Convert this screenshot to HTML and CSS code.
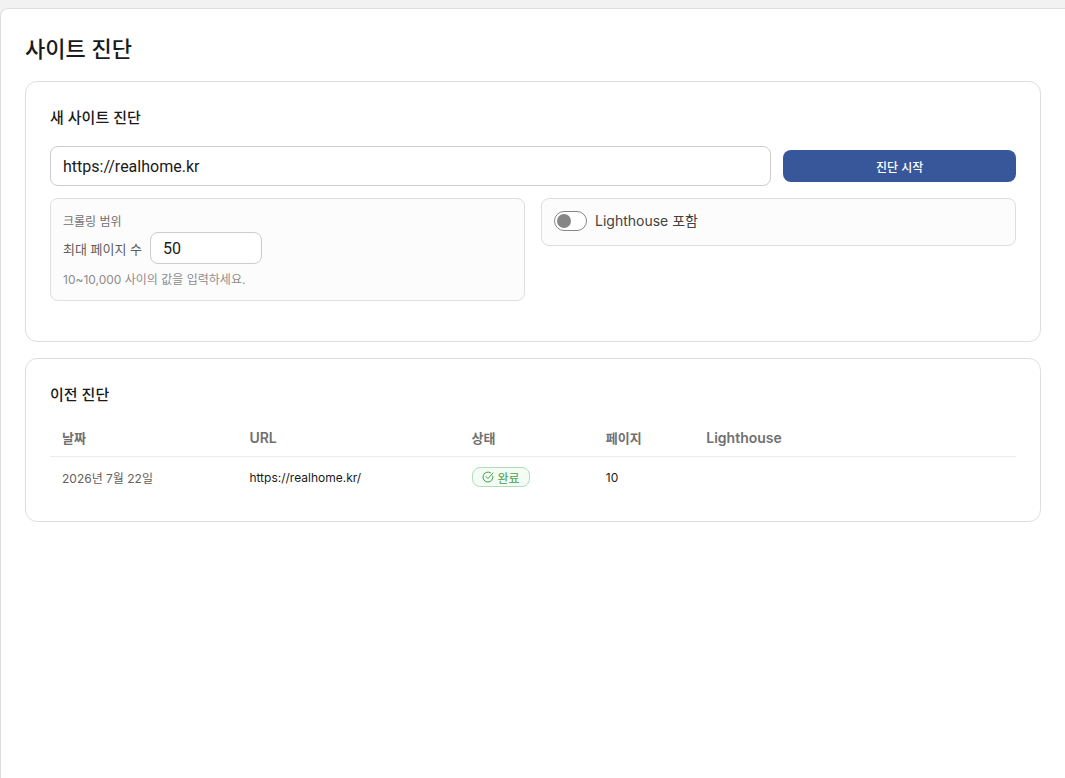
FILE: index.html
```html
<!DOCTYPE html>
<html lang="ko">
<head>
  <meta charset="UTF-8">
  <meta name="viewport" content="width=device-width, initial-scale=1">
  <title>사이트 진단</title>
  <link rel="stylesheet" href="styles.css">
</head>
<body>
  <main class="page">
    <h1>사이트 진단</h1>

    <section class="card">
      <h2>새 사이트 진단</h2>
      <form class="audit-form">
        <div class="url-row">
          <input class="field url-input" type="text" aria-label="사이트 URL" value="https://realhome.kr">
          <button class="start-btn" type="button">진단 시작</button>
        </div>
        <div class="options">
          <div class="panel">
            <p class="panel-title">크롤링 범위</p>
            <div class="limit-row">
              <label for="max-pages">최대 페이지 수</label>
              <input class="field limit-input" type="text" inputmode="numeric" id="max-pages" value="50">
            </div>
            <p class="hint">10~10,000 사이의 값을 입력하세요.</p>
          </div>
          <div class="panel">
            <label class="switch-row">
              <input class="switch" type="checkbox" role="switch">
              <span>Lighthouse 포함</span>
            </label>
          </div>
        </div>
      </form>
    </section>

    <section class="card">
      <h2>이전 진단</h2>
      <table class="history">
        <colgroup>
          <col class="col-date">
          <col class="col-url">
          <col class="col-status">
          <col class="col-pages">
          <col>
        </colgroup>
        <thead>
          <tr>
            <th>날짜</th>
            <th class="latin">URL</th>
            <th>상태</th>
            <th>페이지</th>
            <th class="latin">Lighthouse</th>
          </tr>
        </thead>
        <tbody>
          <tr>
            <td class="date">2026년 7월 22일</td>
            <td>https://realhome.kr/</td>
            <td>
              <span class="badge">
                <svg viewBox="0 0 24 24" width="12" height="12" aria-hidden="true">
                  <path d="M21.8 10A10 10 0 1 1 17 3.34"/>
                  <path d="m8 11 4 4L22 4"/>
                </svg>
                완료
              </span>
            </td>
            <td>10</td>
            <td></td>
          </tr>
        </tbody>
      </table>
    </section>
  </main>
</body>
</html>
```
FILE: styles.css
```css
* {
  box-sizing: border-box;
}

body {
  margin: 0;
  padding-top: 8px;
  min-height: 100vh;
  display: flex;
  flex-direction: column;
  background: #f2f2f2;
  color: #1a1a1a;
  font-family: Inter, "Noto Sans CJK KR", sans-serif;
  font-size: 14px;
}

h1, h2, p {
  margin: 0;
}

.page {
  flex: 1;
  padding: 24px;
  background: #fff;
  border: 1px solid #dedede;
  border-right: none;
  border-bottom: none;
  border-top-left-radius: 8px;
}

h1 {
  margin-bottom: 16px;
  font-size: 22px;
  line-height: 32px;
  font-weight: 500;
}

h2 {
  font-size: 15px;
  line-height: 24px;
  font-weight: 500;
}

.card {
  padding: 24px;
  border: 1px solid #dedede;
  border-radius: 12px;
}

.card + .card {
  margin-top: 16px;
}

/* form */
.audit-form {
  margin: 16px 0;
}

.url-row {
  display: grid;
  grid-template-columns: 3.1fr 1fr;
  gap: 12px;
  align-items: center;
}

.field {
  min-width: 0;
  padding: 0 12px;
  border: 1px solid #ccc;
  border-radius: 8px;
  background: #fff;
  color: #1a1a1a;
  font-family: Roboto, "Noto Sans CJK KR", sans-serif;
  font-size: 16px;
}

.url-input {
  height: 40px;
}

.start-btn {
  height: 32px;
  padding: 0 12px;
  border: none;
  border-radius: 8px;
  background: #38579a;
  color: #fff;
  font-family: inherit;
  font-size: 12px;
  font-weight: 500;
  cursor: pointer;
}

.options {
  display: grid;
  grid-template-columns: 1fr 1fr;
  gap: 16px;
  align-items: start;
  margin-top: 12px;
}

.panel {
  padding: 12px;
  border: 1px solid #dedede;
  border-radius: 8px;
  background: #fcfcfc;
}

.panel-title {
  color: #707070;
  font-size: 12px;
  line-height: 21px;
}

.limit-row {
  display: flex;
  align-items: center;
  gap: 8px;
  margin-bottom: 8px;
  color: #5c5c5c;
  font-size: 13px;
}

.limit-input {
  width: 112px;
  height: 32px;
}

.hint {
  color: #8c8c8c;
  font-size: 12px;
  line-height: 16px;
}

.switch-row {
  display: flex;
  gap: 8px;
  color: #424242;
  line-height: 20px;
  padding-bottom: 2px;
}

.switch {
  appearance: none;
  width: 33px;
  height: 20px;
  margin: 0;
  padding: 2px;
  border: 1px solid #868686;
  border-radius: 10px;
  background: #fff;
}

.switch::before {
  content: "";
  display: block;
  width: 14px;
  height: 14px;
  border-radius: 50%;
  background: #868686;
}

.switch:checked::before {
  margin-left: auto;
}

/* history */
.history {
  width: 100%;
  margin-top: 12px;
  border-collapse: separate;
  border-spacing: 0;
  table-layout: fixed;
}

.col-date {
  width: 19.4%;
}

.col-url {
  width: 23%;
}

.col-status {
  width: 13.9%;
}

.col-pages {
  width: 10.4%;
}

.history th {
  height: 38px;
  padding: 0 12px;
  border-bottom: 1px solid #ededed;
  color: #707070;
  font-size: 13px;
  font-weight: 600;
  text-align: left;
}

.history th.latin {
  font-size: 14px;
}

.history td {
  height: 40px;
  padding: 0 12px;
  font-size: 12px;
}

.history .date {
  color: #616161;
}

.badge {
  display: inline-flex;
  align-items: center;
  gap: 4px;
  height: 20px;
  padding: 0 9px;
  border: 1px solid #b3dbba;
  border-radius: 8px;
  background: #f3fcf5;
  color: #43a047;
  font-size: 12px;
  vertical-align: middle;
}

.badge svg {
  fill: none;
  stroke: currentColor;
  stroke-width: 2;
  stroke-linecap: round;
  stroke-linejoin: round;
}
```
